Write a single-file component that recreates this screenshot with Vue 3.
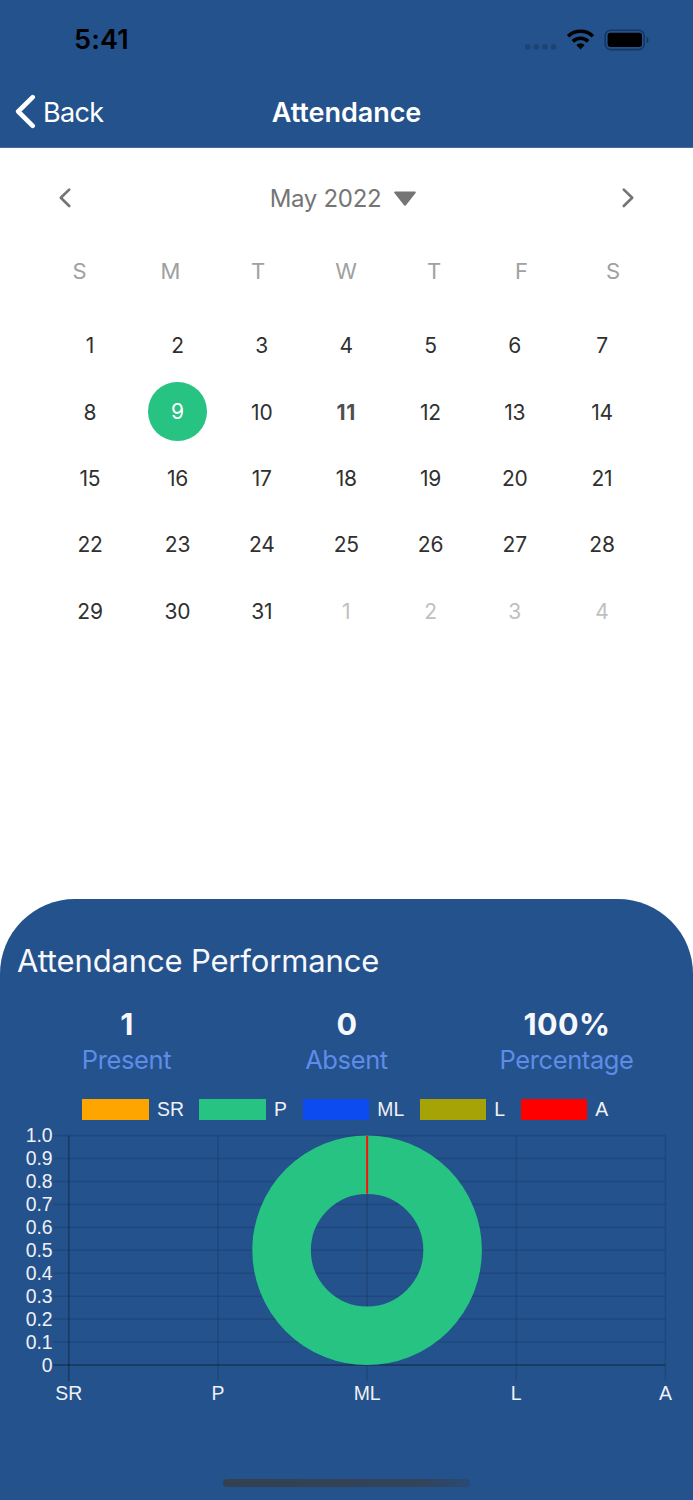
<script setup>
const weekdays = ['S', 'M', 'T', 'W', 'T', 'F', 'S']
const days = Array.from({ length: 35 }, (_, i) => ({
  n: i < 31 ? i + 1 : i - 30,
  next: i > 30,
}))
const stats = [
  { value: '1', label: 'Present' },
  { value: '0', label: 'Absent' },
  { value: '100%', label: 'Percentage' },
]
const legend = [
  { name: 'SR', cls: 'sr' },
  { name: 'P', cls: 'p' },
  { name: 'ML', cls: 'ml' },
  { name: 'L', cls: 'l' },
  { name: 'A', cls: 'a' },
]
const top = 35.6
const bottom = 265
const rows = Array.from({ length: 11 }, (_, i) => ({
  y: top + ((bottom - top) / 10) * i,
  label: i === 10 ? '0' : ((10 - i) / 10).toFixed(1),
}))
const cols = ['SR', 'P', 'ML', 'L', 'A'].map((label, i) => ({ label, x: 68.8 + 149.15 * i }))
</script>

<template>
  <div class="screen">
    <header class="header">
      <div class="status">
        <span class="time">5:41</span>
        <svg class="status-icons" width="126" height="24" viewBox="0 0 126 24">
          <g fill="#1d4374">
            <rect x="1" y="16.2" width="5.4" height="5.4" rx="1.7" />
            <rect x="9.6" y="16.2" width="5.4" height="5.4" rx="1.7" />
            <rect x="18.3" y="16.2" width="5.4" height="5.4" rx="1.7" />
            <rect x="26.9" y="16.2" width="5.4" height="5.4" rx="1.7" />
          </g>
          <g fill="none" stroke="#000" stroke-width="3.5">
            <path d="M44.1 8.2a18 18 0 0 1 24.8 0" />
            <path d="M48.8 13.4a11.3 11.3 0 0 1 15.4 0" />
          </g>
          <path d="M52.3 16.9a6.4 6.4 0 0 1 8.4 0l-4.2 4.5z" />
          <rect x="81.2" y="2.2" width="39" height="19.4" rx="5.6" fill="none" stroke="#173760" stroke-width="1.6" />
          <rect x="83.6" y="4.7" width="34.4" height="14.4" rx="3" />
          <path d="M122.6 8.7c2.5 1.2 2.5 5.4 0 6.6z" fill="#173760" />
        </svg>
      </div>
      <div class="nav">
        <div class="back">
          <svg width="21" height="35" viewBox="0 0 21 35">
            <path d="M17.7 3.2 3.2 17.5l14.5 14.3" fill="none" stroke="#fff" stroke-width="4.6" stroke-linecap="round" stroke-linejoin="round" />
          </svg>
          <span>Back</span>
        </div>
        <h1>Attendance</h1>
      </div>
    </header>

    <main class="calendar">
      <div class="month">
        <svg width="14" height="22" viewBox="0 0 14 22">
          <path d="M11.2 2.6 2.8 10.8l8.4 8.2" fill="none" stroke="#757575" stroke-width="2.7" stroke-linecap="round" stroke-linejoin="round" />
        </svg>
        <div class="month-name">
          <span>May 2022</span>
          <svg width="24" height="16" viewBox="0 0 24 16">
            <path d="M2.2 2.5h19.6L12 14.8z" fill="#757575" stroke="#757575" stroke-width="2" stroke-linejoin="round" />
          </svg>
        </div>
        <svg width="14" height="22" viewBox="0 0 14 22">
          <path d="M2.8 2.6 11.2 10.8l-8.4 8.2" fill="none" stroke="#757575" stroke-width="2.7" stroke-linecap="round" stroke-linejoin="round" />
        </svg>
      </div>
      <div class="weekdays">
        <span v-for="(d, i) in weekdays" :key="i">{{ d }}</span>
      </div>
      <div class="days">
        <span
          v-for="(d, i) in days"
          :key="i"
          :class="{ next: d.next, today: i === 10, marked: i === 8 }"
        ><b>{{ d.n }}</b></span>
      </div>
    </main>

    <section class="sheet">
      <h2>Attendance Performance</h2>
      <div class="stats">
        <div v-for="s in stats" :key="s.label" class="stat">
          <strong>{{ s.value }}</strong>
          <span>{{ s.label }}</span>
        </div>
      </div>
      <div class="legend">
        <div v-for="l in legend" :key="l.name" class="legend-item">
          <i :class="l.cls"></i><span>{{ l.name }}</span>
        </div>
      </div>
      <svg class="chart" width="693" height="330" viewBox="0 0 693 330">
        <g stroke="#000" stroke-opacity=".11" stroke-width="1.6">
          <line v-for="r in rows.slice(0, 10)" :key="r.label" x1="53" :x2="cols[4].x" :y1="r.y" :y2="r.y" />
          <line v-for="c in cols.slice(1)" :key="c.label" :x1="c.x" :x2="c.x" :y1="top" y2="281" />
        </g>
        <g stroke="#000" stroke-opacity=".26" stroke-width="1.8">
          <line x1="53" :x2="cols[4].x" :y1="bottom" :y2="bottom" />
          <line :x1="cols[0].x" :x2="cols[0].x" :y1="top" y2="281" />
        </g>
        <circle cx="367.1" cy="150.2" r="85.5" fill="none" stroke="#27c383" stroke-width="58.6" />
        <line x1="367.1" x2="367.1" y1="36" y2="93.7" stroke="#fa1208" stroke-width="2" />
        <g class="axis" text-anchor="end">
          <text v-for="r in rows" :key="r.label" x="52.6" :y="r.y + 6.8">{{ r.label }}</text>
        </g>
        <g class="axis" text-anchor="middle">
          <text v-for="c in cols" :key="c.label" :x="c.x" y="300">{{ c.label }}</text>
        </g>
      </svg>
      <div class="home"></div>
    </section>
  </div>
</template>

<style>
body {
  margin: 0;
  background: #fff;
}
</style>

<style scoped>
.screen {
  width: 693px;
  height: 1500px;
  display: flex;
  flex-direction: column;
  overflow: hidden;
  background: #fff;
  font-family: Inter, "Liberation Sans", sans-serif;
}
.header {
  box-sizing: border-box;
  height: 148px;
  flex: none;
  background: #23528c;
  border-bottom: 1px solid #486b9a;
}
.status {
  height: 76px;
  display: flex;
  justify-content: space-between;
  align-items: center;
  padding: 3px 43px 0 74px;
  box-sizing: border-box;
}
.time {
  font-size: 27px;
  font-weight: 600;
  letter-spacing: 0.2px;
}
.nav {
  height: 71px;
  display: grid;
  grid-template-columns: 1fr auto 1fr;
  align-items: center;
  color: #fff;
}
.back {
  display: flex;
  align-items: center;
  gap: 7px;
  padding-left: 15px;
  font-size: 27px;
  letter-spacing: -0.7px;
}
.back span,
h1 {
  padding-top: 2px;
}
h1 {
  margin: 0;
  font-size: 27px;
  font-weight: 600;
  letter-spacing: -0.05px;
}
.calendar {
  height: 751px;
  flex: none;
}
.month {
  display: flex;
  justify-content: space-between;
  align-items: center;
  height: 100px;
  padding: 0 58px;
  color: #757575;
}
.month-name {
  display: flex;
  align-items: center;
  gap: 12px;
  margin-right: 6px;
  font-size: 24px;
  letter-spacing: -0.3px;
}
.weekdays {
  display: grid;
  grid-template-columns: 87px 95px 80px 96px 80px 95px 88px;
  padding-left: 36px;
  height: 46px;
  line-height: 46px;
  font-size: 22px;
  text-align: center;
  color: #a0a0a0;
}
.days {
  display: grid;
  grid-template-columns: 91px 84px 84.5px 84.5px 84px 84.5px 90px;
  grid-auto-rows: 66.4px;
  padding: 18.5px 0 0 44.5px;
  font-size: 21px;
  letter-spacing: -0.2px;
  color: #303030;
}
.days span {
  display: flex;
  align-items: center;
  justify-content: center;
}
.days b {
  font-weight: 400;
}
.days .next {
  color: #c0c0c0;
}
.days .today {
  color: #505050;
  letter-spacing: 0.6px;
}
.days .today b {
  font-weight: 700;
}
.days .marked b {
  width: 58.5px;
  height: 58.5px;
  line-height: 59px;
  margin-bottom: 1px;
  border-radius: 50%;
  background: #27c383;
  color: #fff;
  text-align: center;
}
.sheet {
  flex: 1;
  display: flex;
  flex-direction: column;
  background: #23528c;
  border-radius: 75px 75px 0 0;
}
h2 {
  margin: 41px 0 0 17px;
  height: 42px;
  line-height: 42px;
  font-size: 31px;
  font-weight: 400;
  letter-spacing: -0.15px;
  color: #f8f8fc;
}
.stats {
  display: grid;
  grid-template-columns: repeat(3, 220px);
  justify-content: center;
  margin-top: 24px;
  text-align: center;
}
.stat strong,
.stat span {
  display: block;
  height: 36px;
  line-height: 36px;
}
.stat strong {
  font-size: 30.5px;
  letter-spacing: 0.4px;
  padding-left: 1px;
  color: #f8f8fc;
}
.stat span {
  font-size: 25.5px;
  letter-spacing: -0.38px;
  color: #5e8ce8;
}
.legend {
  display: flex;
  gap: 15.5px;
  height: 21px;
  margin-top: 21px;
  padding-left: 82.3px;
  font: 19.4px/21px "Liberation Sans", sans-serif;
  color: #f0f0f6;
}
.legend-item {
  display: flex;
  gap: 8px;
}
.legend i {
  width: 66.7px;
  height: 21px;
}
.sr { background: #ffa500; }
.p { background: #27c383; }
.ml { background: #0b4bef; }
.l { background: #a5a305; }
.a { background: #f00; }
.chart {
  display: block;
  margin-top: -20px;
  flex: none;
}
.axis {
  font: 19.4px "Liberation Sans", sans-serif;
  fill: #f0f0f6;
}
.home {
  width: 247px;
  height: 8.5px;
  margin: 48.5px auto 0;
  border-radius: 5px;
  background: linear-gradient(to right, #33414f, #33435a 80%, #2a4a75);
}
</style>
